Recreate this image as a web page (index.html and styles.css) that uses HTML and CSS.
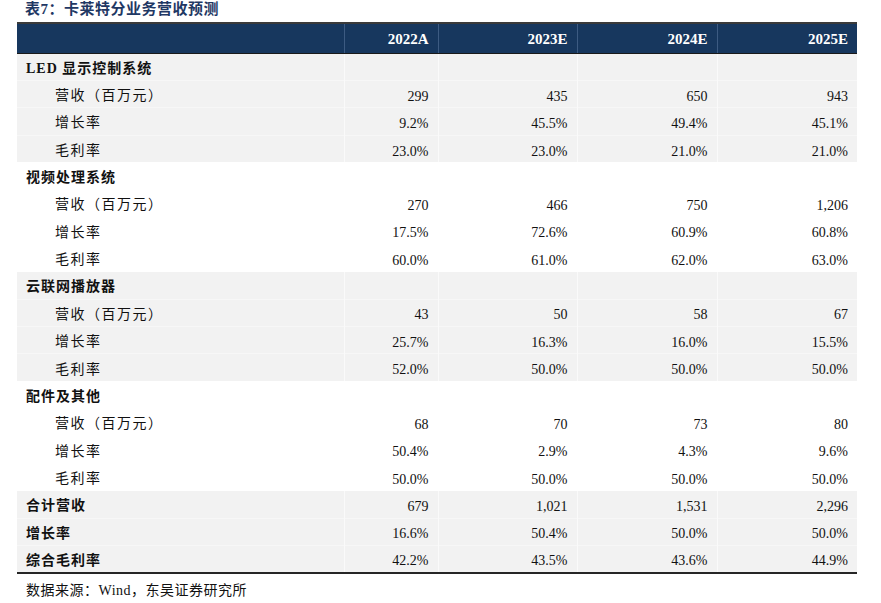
FILE: index.html
```html
<!DOCTYPE html>
<html lang="zh-CN">
<head>
<meta charset="utf-8">
<title>卡莱特分业务营收预测</title>
<link rel="stylesheet" href="styles.css">
</head>
<body>
<div class="title">表7：卡莱特分业务营收预测</div>
<table class="data">
  <colgroup>
    <col class="c-label"><col class="c1"><col class="c2"><col class="c3"><col class="c4">
  </colgroup>
  <thead>
    <tr><th></th><th>2022A</th><th>2023E</th><th>2024E</th><th>2025E</th></tr>
  </thead>
  <tbody class="g-gray">
    <tr class="grp"><td>LED 显示控制系统</td><td></td><td></td><td></td><td></td></tr>
    <tr><td class="sub">营收（百万元）</td><td>299</td><td>435</td><td>650</td><td>943</td></tr>
    <tr><td class="sub">增长率</td><td>9.2%</td><td>45.5%</td><td>49.4%</td><td>45.1%</td></tr>
    <tr><td class="sub">毛利率</td><td>23.0%</td><td>23.0%</td><td>21.0%</td><td>21.0%</td></tr>
  </tbody>
  <tbody class="g-white">
    <tr class="grp"><td>视频处理系统</td><td></td><td></td><td></td><td></td></tr>
    <tr><td class="sub">营收（百万元）</td><td>270</td><td>466</td><td>750</td><td>1,206</td></tr>
    <tr><td class="sub">增长率</td><td>17.5%</td><td>72.6%</td><td>60.9%</td><td>60.8%</td></tr>
    <tr><td class="sub">毛利率</td><td>60.0%</td><td>61.0%</td><td>62.0%</td><td>63.0%</td></tr>
  </tbody>
  <tbody class="g-gray">
    <tr class="grp"><td>云联网播放器</td><td></td><td></td><td></td><td></td></tr>
    <tr><td class="sub">营收（百万元）</td><td>43</td><td>50</td><td>58</td><td>67</td></tr>
    <tr><td class="sub">增长率</td><td>25.7%</td><td>16.3%</td><td>16.0%</td><td>15.5%</td></tr>
    <tr><td class="sub">毛利率</td><td>52.0%</td><td>50.0%</td><td>50.0%</td><td>50.0%</td></tr>
  </tbody>
  <tbody class="g-white">
    <tr class="grp"><td>配件及其他</td><td></td><td></td><td></td><td></td></tr>
    <tr><td class="sub">营收（百万元）</td><td>68</td><td>70</td><td>73</td><td>80</td></tr>
    <tr><td class="sub">增长率</td><td>50.4%</td><td>2.9%</td><td>4.3%</td><td>9.6%</td></tr>
    <tr><td class="sub">毛利率</td><td>50.0%</td><td>50.0%</td><td>50.0%</td><td>50.0%</td></tr>
  </tbody>
  <tbody class="g-gray totals">
    <tr class="grp"><td>合计营收</td><td>679</td><td>1,021</td><td>1,531</td><td>2,296</td></tr>
    <tr class="grp"><td>增长率</td><td>16.6%</td><td>50.4%</td><td>50.0%</td><td>50.0%</td></tr>
    <tr class="grp"><td>综合毛利率</td><td>42.2%</td><td>43.5%</td><td>43.6%</td><td>44.9%</td></tr>
  </tbody>
</table>
<div class="source">数据来源：Wind，东吴证券研究所</div>
</body>
</html>
```

FILE: styles.css
```css
html, body {
  margin: 0;
  padding: 0;
  background: #ffffff;
}

body {
  font-family: "Liberation Serif", "Noto Sans CJK SC", serif;
  color: #111111;
}

.title {
  height: 22px;
  line-height: 18px;
  padding-left: 25px;
  font-size: 15px;
  font-weight: 700;
  color: #1f3864;
  letter-spacing: 0.5px;
}

.data {
  margin-left: 17px;
  width: 840px;
  table-layout: fixed;
  border-collapse: collapse;
  font-size: 14px;
}

.c-label { width: 327px; }
.c1 { width: 94px; }
.c2 { width: 139px; }
.c3 { width: 140px; }
.c4 { width: 140px; }

.data thead tr {
  height: 30px;
}

.data th {
  background: #17375e;
  color: #ffffff;
  font-weight: 700;
  text-align: right;
  padding: 2px 9px 0 0;
  border-top: 2px solid #3a3a3a;
  border-bottom: 1px solid #1a1a1a;
  border-left: 1px solid #3d5b82;
  font-size: 15px;
}

.data th:first-child {
  border-left: none;
}

.data tbody tr {
  height: 27.37px;
}

.data td {
  padding: 5px 9px 0 0;
  text-align: right;
  white-space: nowrap;
  border-left: 1px solid rgba(255, 255, 255, 0.6);
}

.data td:first-child {
  text-align: left;
  padding-top: 0;
  padding-left: 9px;
  border-left: none;
}

.data td.sub {
  padding-left: 38px;
  letter-spacing: 1.5px;
}

.grp td:first-child {
  font-weight: 700;
  letter-spacing: 1px;
}

.g-gray td {
  background: #f2f2f2;
}

.g-gray tr + tr td {
  border-top: 1px solid #f7f7f7;
}

.g-white td {
  background: #ffffff;
}

.totals tr:last-child td {
  border-bottom: 2px solid #262626;
}

.source {
  padding-left: 26px;
  margin-top: 8px;
  line-height: 18px;
  font-size: 14px;
  color: #111111;
  letter-spacing: 0.5px;
}
```
